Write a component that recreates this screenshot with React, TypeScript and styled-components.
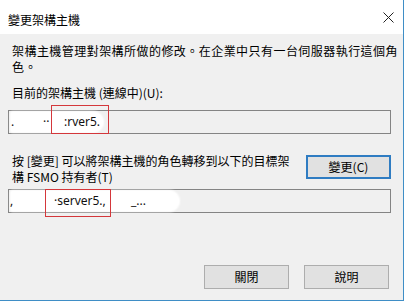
import { FC } from "react";
import styled, { createGlobalStyle } from "styled-components";

const GlobalStyle = createGlobalStyle`
  html, body {
    margin: 0;
    padding: 0;
    background: #ffffff;
  }
  * {
    box-sizing: border-box;
  }
`;

const CJK = `"Noto Sans CJK TC", "Noto Sans", sans-serif`;

const SWindow = styled.div`
  position: relative;
  display: flex;
  flex-direction: column;
  width: 404px;
  height: 301px;
  border-right: 1px solid #3f8ec6;
  border-bottom: 1px solid #3f8ec6;
  background: #f0f0f0;
  font-family: ${CJK};
  font-size: 12px;
  color: #000;
`;

const STitleBar = styled.div`
  display: flex;
  align-items: center;
  justify-content: space-between;
  height: 34px;
  padding: 5px 0 0 8px;
  background: #ffffff;
  line-height: 16px;
`;

const SClose = styled.div`
  display: flex;
  align-items: center;
  justify-content: center;
  width: 30px;
  height: 29px;
  padding-bottom: 4px;
`;

const SBody = styled.div`
  display: flex;
  flex: 1;
  flex-direction: column;
  padding: 0 12px 11px 8px;
`;

const SText = styled.div<{ $top: number }>`
  margin: ${(p) => p.$top}px 0 0 4px;
  line-height: 16px;
  white-space: nowrap;
`;

const SWrapText = styled(SText)`
  white-space: normal;
  width: 388px;
  letter-spacing: 0.45px;
`;

const STextBox = styled.div<{ $top: number }>`
  position: relative;
  display: flex;
  align-items: center;
  height: 24px;
  margin-top: ${(p) => p.$top}px;
  padding-left: 3px;
  border: 1px solid #848484;
  background: #f0f0f0;
  font-family: "Noto Sans", "Open Sans", sans-serif;
  font-size: 12px;
`;

// 白く塗りつぶされた部分
const SMask = styled.div<{ $width: number }>`
  position: absolute;
  top: 1px;
  left: 2px;
  width: ${(p) => p.$width}px;
  height: 20px;
  background: #ffffff;
  border-radius: 2px 10px 10px 2px;
  box-shadow: 0 0 2px 1px #ffffff;
`;

const SFragment = styled.span<{ $left: number }>`
  position: absolute;
  left: ${(p) => p.$left}px;
  top: 2px;
  line-height: 18px;
  color: #111;
`;

const SRow = styled.div`
  display: flex;
  align-items: flex-start;
  justify-content: space-between;
  margin-top: 19px;
`;

const SButton = styled.button<{ $default?: boolean }>`
  width: 85px;
  height: 24px;
  margin: 0;
  padding: 0;
  border: ${(p) => (p.$default ? "2px solid #2f7cc2" : "1px solid #adadad")};
  background: #e1e1e1;
  font-family: ${CJK};
  font-size: 12px;
  color: #000;
  line-height: 16px;
`;

const SButtonRow = styled.div`
  display: flex;
  justify-content: flex-end;
  gap: 15px;
  margin-top: auto;
  padding-right: 2px;
`;

const SRedBox = styled.div<{ $x: number; $y: number; $w: number; $h: number }>`
  position: absolute;
  left: ${(p) => p.$x}px;
  top: ${(p) => p.$y}px;
  width: ${(p) => p.$w}px;
  height: ${(p) => p.$h}px;
  border: 1px solid #d4373b;
`;

const CloseIcon: FC = () => (
  <svg width="11" height="11" viewBox="0 0 11 11">
    <path d="M0.5 0.5 L10.5 10.5 M10.5 0.5 L0.5 10.5" stroke="#222" strokeWidth="1" fill="none" />
  </svg>
);

const App: FC = () => {
  return (
    <>
      <GlobalStyle />
      <SWindow>
        <STitleBar>
          <span>變更架構主機</span>
          <SClose>
            <CloseIcon />
          </SClose>
        </STitleBar>
        <SBody>
          <SWrapText $top={9}>
            架構主機管理對架構所做的修改。在企業中只有一台伺服器執行這個角色。
          </SWrapText>
          <SText $top={10}>目前的架構主機 (連線中)(U):</SText>
          {/* 目前的架構主機 */}
          <STextBox $top={9}>
            <SMask $width={92} />
            <SFragment $left={2}>.</SFragment>
            <SFragment $left={34}>··</SFragment>
            <SFragment $left={55}>:rver5.</SFragment>
          </STextBox>
          <SRow>
            <SText $top={0}>
              按 [變更] 可以將架構主機的角色轉移到以下的目標架
              <br />構 FSMO 持有者(T)
            </SText>
            <SButton $default style={{ marginTop: 2 }}>
              變更(C)
            </SButton>
          </SRow>
          {/* 目標架構主機 */}
          <STextBox $top={4}>
            <SMask $width={168} />
            <SFragment $left={1}>,</SFragment>
            <SFragment $left={45}>·server5.,</SFragment>
            <SFragment $left={122}>_...</SFragment>
          </STextBox>
          <SButtonRow>
            <SButton>關閉</SButton>
            <SButton>說明</SButton>
          </SButtonRow>
        </SBody>
        <SRedBox $x={51} $y={105} $w={58} $h={29} />
        <SRedBox $x={45} $y={189} $w={66} $h={28} />
      </SWindow>
    </>
  );
};

export default App;
